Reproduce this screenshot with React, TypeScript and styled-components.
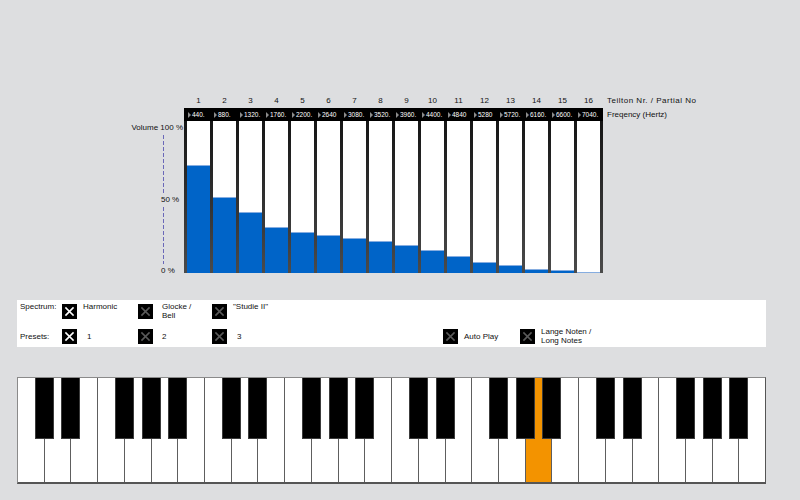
import React from "react";
import styled, { createGlobalStyle } from "styled-components";

// Obertöne: Frequenzen und Lautstärke (px von 152)
const freqs = [
  "440.", "880.", "1320.", "1760.", "2200.", "2640", "3080.", "3520.",
  "3960.", "4400.", "4840", "5280", "5720.", "6160.", "6600.", "7040.",
];
const levels = [108, 76, 61, 46, 41, 38, 35, 32, 28, 23, 17, 11, 8, 4, 3, 1.5];

const blackAfter = [0, 1, 3, 4, 5];
const activeKey = 19;

const GlobalStyle = createGlobalStyle`
  body {
    margin: 0;
    background: #dddee0;
    font-family: "Liberation Sans", Arial, sans-serif;
    color: #111;
  }
`;

const Page = styled.div`
  width: 800px;
  height: 500px;
  padding-top: 94px;
  box-sizing: border-box;
  overflow: hidden;
`;

const Chart = styled.div`
  display: grid;
  grid-template-columns: 54px 419px auto;
  margin-left: 130px;
`;

const Spacer = styled.div``;

const ColumnGrid = styled.div`
  display: grid;
  grid-template-columns: repeat(16, 23px);
  column-gap: 3px;
  padding: 0 3px;
`;

const NumberRow = styled(ColumnGrid)`
  height: 13px;
  line-height: 13px;
  margin-bottom: 1px;
  font-size: 8px;
  text-align: center;
`;

const SideLabel = styled.div<{ $wide?: boolean }>`
  padding-left: 4px;
  font-size: 8px;
  line-height: 13px;
  white-space: nowrap;
  letter-spacing: ${(p) => (p.$wide ? "0.5px" : "0")};
`;

const FreqStrip = styled(ColumnGrid)`
  height: 13px;
  background: #000;
  align-items: center;
`;

const FreqCell = styled.div`
  display: flex;
  align-items: center;
  gap: 1.5px;
  color: #fff;
  font-size: 6.5px;
  white-space: nowrap;
  overflow: hidden;
`;

const Arrow = styled.span`
  width: 0;
  height: 0;
  border-left: 3px solid #8c8c8c;
  border-top: 3px solid transparent;
  border-bottom: 3px solid transparent;
  margin-left: 0.5px;
`;

const Axis = styled.div`
  display: flex;
  flex-direction: column;
  height: 152px;
  font-size: 8px;
`;

const AxisTitle = styled.div`
  margin-top: 2px;
  line-height: 10px;
  text-align: right;
  padding-right: 1px;
  white-space: nowrap;
`;

const AxisTick = styled.div<{ $last?: boolean }>`
  line-height: 10px;
  padding-left: 31px;
  margin-bottom: ${(p) => (p.$last ? "-3px" : "0")};
`;

const AxisLine = styled.div`
  flex: 1;
  width: 1px;
  margin: 2px 0 2px 33px;
  background: repeating-linear-gradient(
    to bottom,
    #6a68b8 0 4px,
    transparent 4px 6px
  );
`;

const Bars = styled(ColumnGrid)`
  height: 152px;
  background: linear-gradient(#151515, #4b4b4b);
`;

const BarCell = styled.div`
  display: flex;
  flex-direction: column;
  justify-content: flex-end;
  background: #fff;
`;

const BarFill = styled.div`
  box-sizing: border-box;
  background: #0064c8;
  border-top: 1px solid #86ade0;
`;

const Panel = styled.div`
  display: grid;
  grid-template-columns: 42px 76px 74px 231px 77px 1fr;
  grid-template-rows: 15px 15px;
  row-gap: 10px;
  width: 749px;
  height: 47px;
  box-sizing: border-box;
  margin: 27px 0 0 17px;
  padding: 4px 0 3px 3px;
  background: #fff;
  font-size: 8px;
`;

const RowLabel = styled.div<{ $top?: boolean }>`
  line-height: 9px;
  align-self: ${(p) => (p.$top ? "start" : "center")};
  margin-top: ${(p) => (p.$top ? "-2px" : "-1px")};
`;

const Option = styled.div<{ $top?: boolean; $gap?: number }>`
  display: flex;
  align-items: ${(p) => (p.$top ? "flex-start" : "center")};
  gap: ${(p) => p.$gap ?? 6}px;
`;

const OptionText = styled.div<{ $top?: boolean }>`
  line-height: 9px;
  margin-top: ${(p) => (p.$top ? "-2px" : "-1px")};
`;

const Box = styled.div`
  display: flex;
  align-items: center;
  justify-content: center;
  width: 15px;
  height: 15px;
  flex-shrink: 0;
  background: #000;
`;

const Keyboard = styled.div`
  display: flex;
  width: 749px;
  height: 107px;
  box-sizing: border-box;
  margin: 30px 0 0 17px;
  border: 1px solid #8a8a8a;
  border-right-color: #555;
  border-bottom: 2px solid #555;
  background: #fff;
`;

const WhiteKey = styled.div<{ $active?: boolean; $first?: boolean }>`
  position: relative;
  flex: 1;
  box-sizing: border-box;
  border-left: ${(p) => (p.$first ? "none" : "1px solid #5e5e5e")};
  background: ${(p) => (p.$active ? "#f39300" : "#fff")};
`;

const BlackKey = styled.div`
  position: absolute;
  top: 0;
  right: -10px;
  z-index: 2;
  width: 19px;
  height: 61px;
  box-sizing: border-box;
  background: #000;
  border: 1px solid #3c3c3c;
  border-top: none;
`;

const Check = ({ on }: { on?: boolean }) => (
  <Box>
    <svg width="15" height="15" viewBox="0 0 15 15">
      <path
        d="M4 4 L11 11 M11 4 L4 11"
        stroke={on ? "#fff" : "#5a5a5a"}
        strokeWidth="1.7"
        strokeLinecap="square"
      />
    </svg>
  </Box>
);

interface OptProps {
  label: React.ReactNode;
  on?: boolean;
  top?: boolean;
  gap?: number;
}

const Opt = ({ label, on, top, gap }: OptProps) => (
  <Option $top={top} $gap={gap}>
    <Check on={on} />
    <OptionText $top={top}>{label}</OptionText>
  </Option>
);

export default function App() {
  return (
    <Page>
      <GlobalStyle />
      <Chart>
        <Spacer />
        <NumberRow>
          {freqs.map((_, i) => (
            <span key={i}>{i + 1}</span>
          ))}
        </NumberRow>
        <SideLabel $wide>Teilton Nr. / Partial No</SideLabel>

        <Spacer />
        <FreqStrip>
          {freqs.map((f) => (
            <FreqCell key={f}>
              <Arrow />
              {f}
            </FreqCell>
          ))}
        </FreqStrip>
        <SideLabel>Freqency (Hertz)</SideLabel>

        <Axis>
          <AxisTitle>Volume 100 %</AxisTitle>
          <AxisLine />
          <AxisTick>50 %</AxisTick>
          <AxisLine />
          <AxisTick $last>0 %</AxisTick>
        </Axis>
        <Bars>
          {levels.map((h, i) => (
            <BarCell key={i}>
              <BarFill style={{ height: h }} />
            </BarCell>
          ))}
        </Bars>
        <Spacer />
      </Chart>

      <Panel>
        <RowLabel $top>Spectrum:</RowLabel>
        <Opt top on label="Harmonic" />
        <Opt top gap={9} label={<>Glocke /<br />Bell</>} />
        <Opt top label={'"Studie II"'} />
        <Spacer />
        <Spacer />

        <RowLabel>Presets:</RowLabel>
        <Opt on gap={10} label="1" />
        <Opt gap={9} label="2" />
        <Opt gap={10} label="3" />
        <Opt label="Auto Play" />
        <Opt label={<>Lange Noten /<br />Long Notes</>} />
      </Panel>

      <Keyboard>
        {Array.from({ length: 28 }, (_, i) => (
          <WhiteKey key={i} $first={i === 0} $active={i === activeKey}>
            {i < 27 && blackAfter.includes(i % 7) && <BlackKey />}
          </WhiteKey>
        ))}
      </Keyboard>
    </Page>
  );
}
